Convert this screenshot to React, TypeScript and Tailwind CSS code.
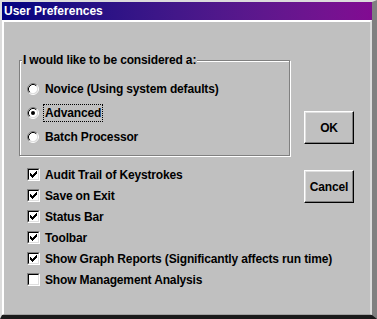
import React from "react";

const CHECK = [
  "......X",
  ".....XX",
  "X...XXX",
  "XX.XXX.",
  "XXXXX..",
  ".XXX...",
  "..X....",
];

function Radio({ checked }: { checked?: boolean }) {
  return (
    <svg width="12" height="12" viewBox="0 0 12 12" className="shrink-0">
      <circle cx="6" cy="6" r="4.5" fill="white" />
      <path d="M9.89 2.11 A5.5 5.5 0 0 0 2.11 9.89" fill="none" stroke="#808080" />
      <path d="M9.89 2.11 A5.5 5.5 0 0 1 2.11 9.89" fill="none" stroke="#ffffff" />
      <path d="M9.18 2.82 A4.5 4.5 0 0 0 2.82 9.18" fill="none" stroke="#000000" />
      <path d="M9.18 2.82 A4.5 4.5 0 0 1 2.82 9.18" fill="none" stroke="#dfdfdf" />
      {checked && <circle cx="6" cy="6" r="2" fill="black" />}
    </svg>
  );
}

function Checkbox({ checked }: { checked?: boolean }) {
  return (
    <div className="h-[13px] w-[13px] shrink-0 border border-t-[#808080] border-l-[#808080] border-r-white border-b-white">
      <div className="flex h-full w-full items-center justify-center border border-t-black border-l-black border-r-[#dfdfdf] border-b-[#dfdfdf] bg-white">
        {checked && (
          <svg width="7" height="7" viewBox="0 0 7 7" shapeRendering="crispEdges">
            {CHECK.flatMap((row, y) =>
              row.split("").map((c, x) =>
                c === "X" ? <rect key={`${x}-${y}`} x={x} y={y} width="1" height="1" fill="black" /> : null
              )
            )}
          </svg>
        )}
      </div>
    </div>
  );
}

function Button({ label }: { label: string }) {
  return (
    <div className="flex h-[33px] w-[50px] items-center justify-center border border-t-white border-l-white border-r-black border-b-black shadow-[inset_-1px_-1px_0_#808080,inset_1px_1px_0_#dfdfdf]">
      {label}
    </div>
  );
}

const levels = [
  { label: "Novice (Using system defaults)" },
  { label: "Advanced", checked: true },
  { label: "Batch Processor" },
];

const options = [
  { label: "Audit Trail of Keystrokes", checked: true },
  { label: "Save on Exit", checked: true },
  { label: "Status Bar", checked: true },
  { label: "Toolbar", checked: true },
  { label: "Show Graph Reports (Significantly affects run time)", checked: true },
  { label: "Show Management Analysis", checked: false },
];

export default function App() {
  return (
    <div
      className="flex h-[319px] w-[377px] flex-col overflow-hidden border-t-2 border-l-2 border-r-[5px] border-b-4 border-t-[#dcdcdc] border-l-[#dcdcdc] border-r-[#808080] border-b-[#1a1a1a] bg-[#c0c0c0] text-[12px] font-bold leading-[14px] text-black"
      style={{ fontFamily: '"Liberation Sans", Arial, sans-serif' }}
    >
      <div className="flex h-[18px] shrink-0 items-center bg-gradient-to-r from-[#000080] to-[#820a92] pl-[2px] leading-[18px] text-white">
        User Preferences
      </div>

      <div className="flex flex-1 border-t-2 border-l-2 border-r-2 border-b border-t-white border-l-white border-r-[#dcdcdc] border-b-[#a0a0a0] pl-[15px] tracking-[-0.15px]">
        <div className="mt-[38px] w-[272px] shrink-0">
          <div className="relative w-[271px] border border-[#808080] pt-[16px] pb-[6px] pl-[7px] shadow-[inset_1px_1px_0_white,1px_1px_0_white]">
            <span className="absolute -top-[8px] left-[2px] whitespace-nowrap bg-[#c0c0c0] px-[1px]">
              I would like to be considered a:
            </span>
            {levels.map((l) => (
              <div key={l.label} className="flex h-[24px] items-center gap-[6px] whitespace-nowrap">
                <Radio checked={l.checked} />
                {l.checked ? (
                  <span className="-my-[2px] -ml-[2px] border border-dotted border-black px-[1px] py-[1px]">
                    {l.label}
                  </span>
                ) : (
                  <span>{l.label}</span>
                )}
              </div>
            ))}
          </div>

          <div className="mt-[8px] pl-[8px]">
            {options.map((o) => (
              <div key={o.label} className="flex h-[21px] items-center gap-[5px] whitespace-nowrap">
                <Checkbox checked={o.checked} />
                <span>{o.label}</span>
              </div>
            ))}
          </div>
        </div>

        <div className="ml-[13px] flex flex-col gap-[26px] pt-[89px]">
          <Button label="OK" />
          <Button label="Cancel" />
        </div>
      </div>
    </div>
  );
}
